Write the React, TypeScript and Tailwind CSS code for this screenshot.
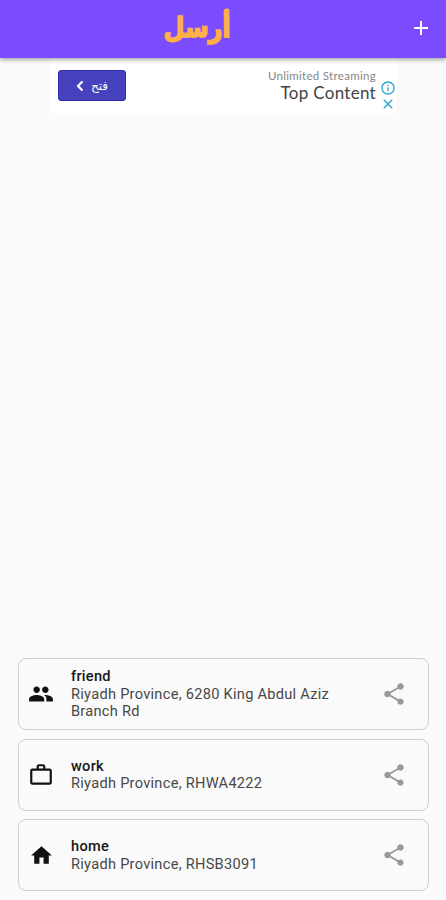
import { MdAdd, MdClose, MdHome, MdInfoOutline, MdPeople, MdShare, MdWorkOutline } from "react-icons/md";
import type { IconType } from "react-icons";

interface Place {
  name: string;
  address: string;
  icon: IconType;
  iconSize: number;
}

const places: Place[] = [
  { name: "friend", address: "Riyadh Province, 6280 King Abdul Aziz Branch Rd", icon: MdPeople, iconSize: 26 },
  { name: "work", address: "Riyadh Province, RHWA4222", icon: MdWorkOutline, iconSize: 26 },
  { name: "home", address: "Riyadh Province, RHSB3091", icon: MdHome, iconSize: 25 },
];

function Header() {
  return (
    <header className="relative z-10 h-[58px] shrink-0 grid grid-cols-[1fr_auto_1fr] items-center bg-[#7c4dff] shadow-[0_1px_5px_rgba(0,0,0,0.45)]">
      <div />
      <h1
        dir="rtl"
        className="w-[70px] h-[55px] flex items-center justify-center -ml-[52px] -mt-[3px] origin-center scale-x-[0.8] scale-y-[0.92] font-['DejaVu_Sans',sans-serif] text-[30px] leading-none font-bold text-[#ffb04a] [-webkit-text-stroke:1.5px_#ffb04a] [text-shadow:1px_1px_0_#e8874a]"
      >
        أرسل
      </h1>
      <button className="justify-self-end mr-[13px] mb-[2px] text-white">
        <MdAdd size={24} />
      </button>
    </header>
  );
}

function AdBanner() {
  return (
    <div className="w-[346px] h-[55px] ml-[51px] shrink-0 flex bg-white">
      <button
        dir="rtl"
        className="mt-[12px] ml-[7px] w-[68px] h-[31px] flex items-center justify-center gap-[7px] rounded-[3px] border border-[#302db5] bg-[#4642bd] text-white font-['DejaVu_Sans',sans-serif] text-[12px]"
      >
        <span>فتح</span>
        <svg width="8" height="12" viewBox="0 0 8 12" fill="none" stroke="currentColor" strokeWidth="2.2">
          <path d="M6.5 1.5 2 6l4.5 4.5" />
        </svg>
      </button>
      <div className="flex-1 pt-[10px] text-right whitespace-nowrap font-['Lato',sans-serif]">
        <p className="text-[11.5px] leading-[15px] tracking-[0.3px] text-[#858585]">Unlimited Streaming</p>
        <p className="text-[17px] leading-[20px] tracking-[0.3px] text-[#424242]">Top Content</p>
      </div>
      <div className="w-[21px] pt-[22px] pl-[2px] flex flex-col items-center text-[#25a5cb]">
        <MdInfoOutline size={16} />
        <MdClose size={16} />
      </div>
    </div>
  );
}

function PlaceCard({ name, address, icon: Icon, iconSize }: Place) {
  return (
    <li className="h-[72px] flex items-center rounded-[8px] border border-[#cfcfcf] pl-[9px] pr-[21px]">
      <div className="w-[26px] shrink-0 flex justify-center text-[#111]">
        <Icon size={iconSize} />
      </div>
      <div className="ml-[17px] mt-px w-[285px] text-[14.6px] leading-[17.5px] tracking-[0.28px]">
        <p className="font-medium text-[#161616]">{name}</p>
        <p className="text-[#484848]">{address}</p>
      </div>
      <button className="ml-auto text-[#999]">
        <MdShare size={26} />
      </button>
    </li>
  );
}

export default function App() {
  return (
    <div className="h-screen flex flex-col overflow-hidden bg-[#fafafa] font-['Roboto',sans-serif]">
      <Header />
      <AdBanner />
      <ul className="mt-auto mb-[9px] ml-[18px] mr-[17px] flex flex-col gap-[8.5px]">
        {places.map((place) => (
          <PlaceCard key={place.name} {...place} />
        ))}
      </ul>
    </div>
  );
}
